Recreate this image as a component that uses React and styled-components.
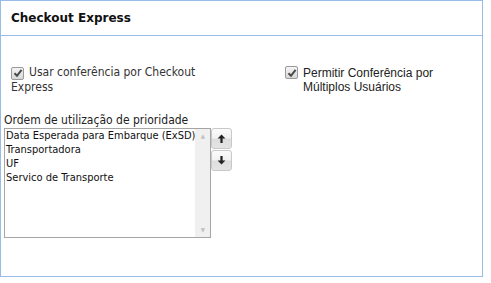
import React from 'react'
import styled, { createGlobalStyle } from 'styled-components'

const GlobalStyle = createGlobalStyle`
  html, body {
    margin: 0;
    padding: 0;
    background: #fff;
  }
  body {
    font-family: Tahoma, "DejaVu Sans Condensed", "DejaVu Sans", sans-serif;
  }
`

const items = [
  'Data Esperada para Embarque (ExSD)',
  'Transportadora',
  'UF',
  'Servico de Transporte',
]

const Check = () => (
  <CheckBox>
    <svg width="10" height="10" viewBox="0 0 10 10">
      <path d="M1.5 5.2 L4 7.8 L8.6 1.8" fill="none" stroke="#4a4a4a" strokeWidth="2" />
    </svg>
  </CheckBox>
)

const Arrow = ({ down }) => (
  <svg width="9" height="9" viewBox="0 0 8 8">
    {down ? (
      <path d="M3 0 H5 V4 H7.5 L4 7.5 L0.5 4 H3 Z" fill="#222" />
    ) : (
      <path d="M3 8 H5 V4 H7.5 L4 0.5 L0.5 4 H3 Z" fill="#222" />
    )}
  </svg>
)

const App = () => {
  return (
    <>
      <GlobalStyle />
      <Panel>
        <Header>Checkout Express</Header>
        <Body>
          <OptionsRow>
            <LeftOption>
              <Check />
              Usar conferência por Checkout Express
            </LeftOption>
            <RightOption>
              <Check />
              <span>Permitir Conferência por Múltiplos Usuários</span>
            </RightOption>
          </OptionsRow>
          <PriorityLabel>Ordem de utilização de prioridade</PriorityLabel>
          <PriorityRow>
            <ListBox>
              <ListItems>
                {items.map((item) => (
                  <ListItem key={item}>{item}</ListItem>
                ))}
              </ListItems>
              <ScrollBar>
                <ScrollArrow>▲</ScrollArrow>
                <ScrollArrow>▼</ScrollArrow>
              </ScrollBar>
            </ListBox>
            <Buttons>
              <MoveButton>
                <Arrow />
              </MoveButton>
              <MoveButton>
                <Arrow down />
              </MoveButton>
            </Buttons>
          </PriorityRow>
        </Body>
      </Panel>
    </>
  )
}

const Panel = styled.div`
  width: 481px;
  height: 275px;
  border: 1px solid #99bbe8;
  background: #fff;
  display: flex;
  flex-direction: column;
`

const Header = styled.div`
  height: 34px;
  border-bottom: 1px solid #99bbe8;
  display: flex;
  align-items: center;
  padding-left: 10px;
  font-family: "DejaVu Sans", sans-serif;
  font-weight: bold;
  font-size: 12px;
  color: #111;
`

const Body = styled.div`
  padding: 29px 0 0 3px;
`

const OptionsRow = styled.div`
  display: flex;
`

const LeftOption = styled.div`
  width: 190px;
  padding-left: 7px;
  font-family: "DejaVu Sans Condensed", "DejaVu Sans", sans-serif;
  font-size: 12px;
  line-height: 14px;
  color: #333;
`

const RightOption = styled.div`
  margin-left: 84px;
  display: flex;
  align-items: flex-start;
  font-family: "Liberation Sans", Arial, sans-serif;
  font-size: 12px;
  line-height: 14px;
  color: #222;
  width: 170px;
  span {
    margin-top: 1px;
  }
`

const CheckBox = styled.span`
  display: inline-flex;
  align-items: center;
  justify-content: center;
  vertical-align: -2px;
  width: 11px;
  height: 11px;
  margin-right: 5px;
  border: 1px solid #9a9a9a;
  border-radius: 2px;
  background: linear-gradient(#f4f4f4, #d8d8d8);
  flex-shrink: 0;
`

const PriorityLabel = styled.div`
  margin-top: 19px;
  font-family: "DejaVu Sans Condensed", "DejaVu Sans", sans-serif;
  font-size: 12px;
  line-height: 14px;
  color: #222;
`

const PriorityRow = styled.div`
  display: flex;
  align-items: flex-start;
  margin-top: 1px;
`

const ListBox = styled.div`
  width: 205px;
  height: 108px;
  border: 1px solid #a5a5a5;
  display: flex;
  background: #fff;
`

const ListItems = styled.div`
  flex: 1;
  padding: 0 0 0 1px;
`

const ListItem = styled.div`
  font-family: "DejaVu Sans Condensed", "DejaVu Sans", sans-serif;
  font-size: 11px;
  line-height: 14px;
  color: #111;
  white-space: nowrap;
`

const ScrollBar = styled.div`
  width: 17px;
  background: #f0f0f0;
  display: flex;
  flex-direction: column;
  justify-content: space-between;
  align-items: center;
`

const ScrollArrow = styled.span`
  font-size: 6px;
  color: #c0c0c0;
  line-height: 14px;
`

const Buttons = styled.div`
  display: flex;
  flex-direction: column;
  gap: 1px;
`

const MoveButton = styled.div`
  width: 19px;
  height: 19px;
  border: 1px solid #c8c8c8;
  border-radius: 3px;
  background: linear-gradient(#fbfbfb 0%, #f2f2f2 45%, #dedede 55%, #e4e4e4 100%);
  display: flex;
  align-items: center;
  justify-content: center;
`

export default App
